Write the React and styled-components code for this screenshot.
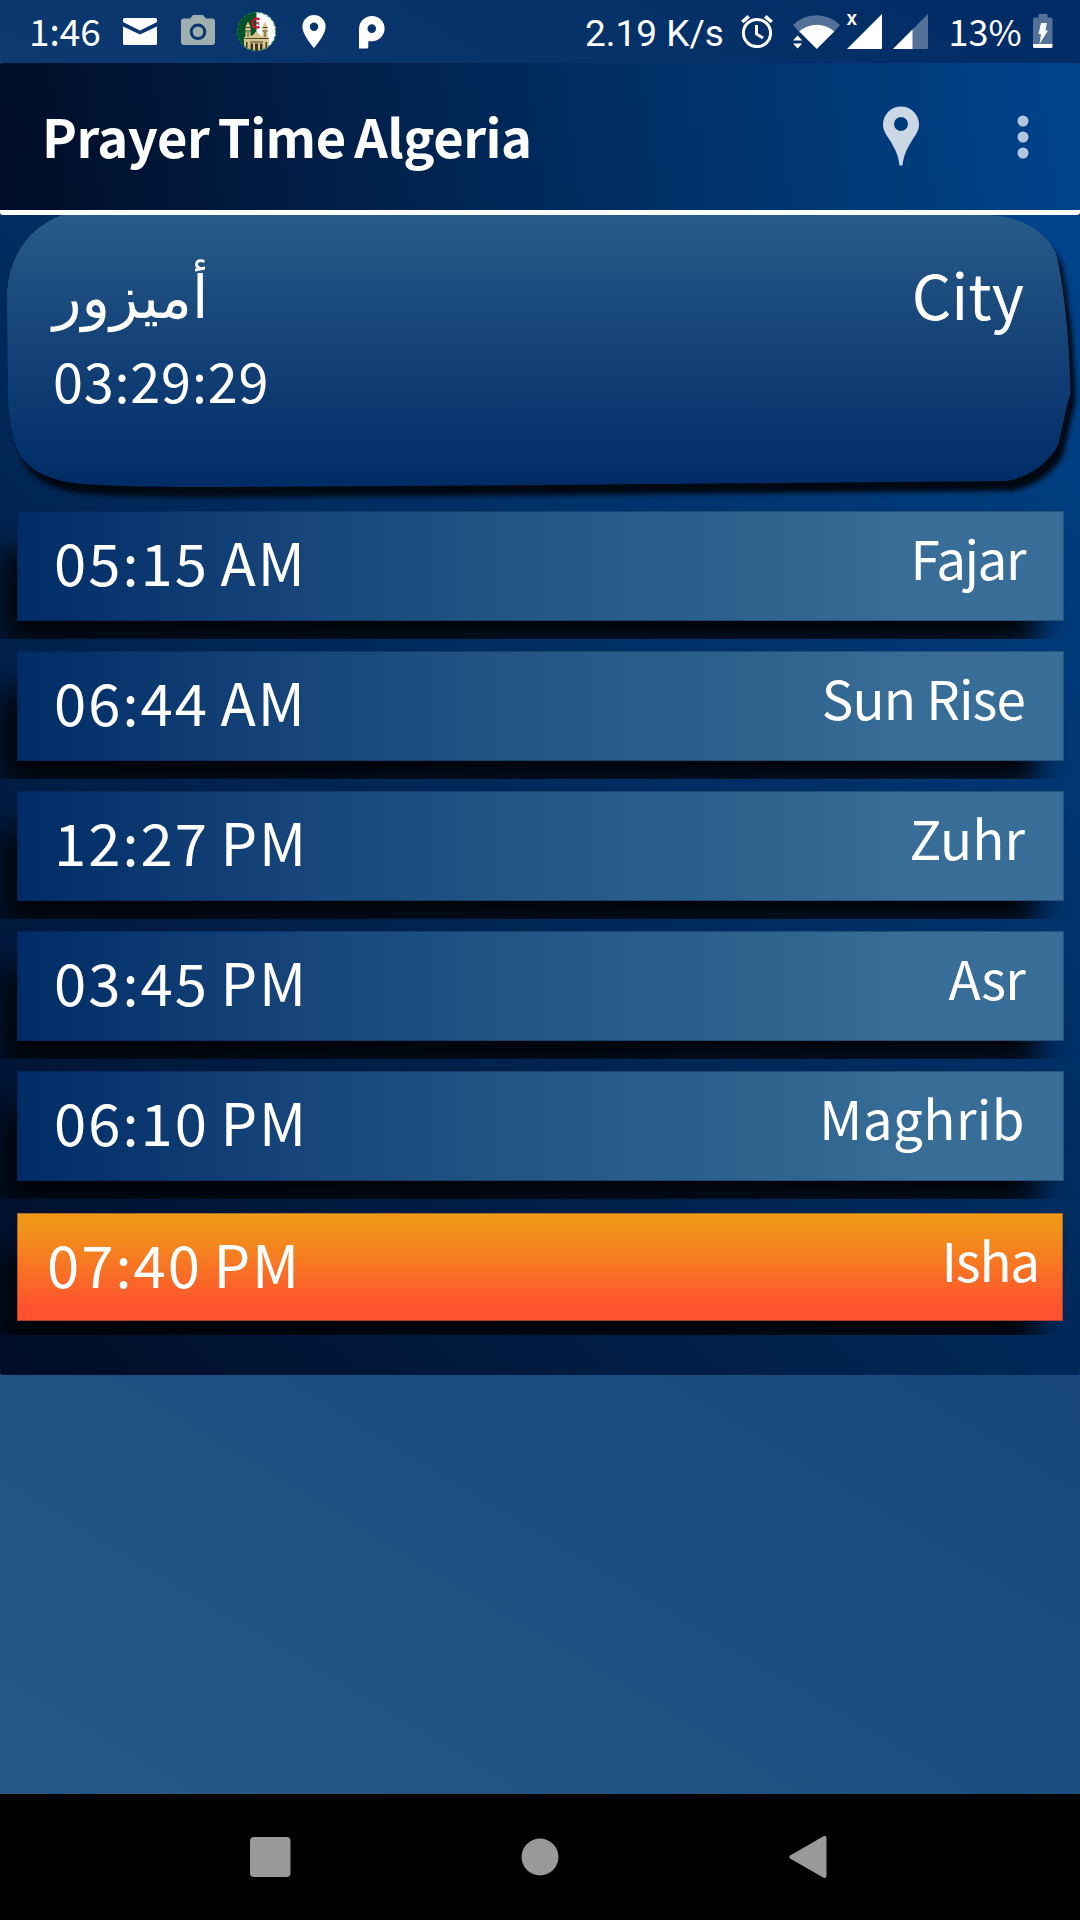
import styled, { createGlobalStyle } from 'styled-components';

const prayers = [
    { name: 'Fajar', time: '05:15 AM', tracking: -1.5 },
    { name: 'Sun Rise', time: '06:44 AM', tracking: -0.9 },
    { name: 'Zuhr', time: '12:27 PM', tracking: 0 },
    { name: 'Asr', time: '03:45 PM', tracking: -0.8 },
    { name: 'Maghrib', time: '06:10 PM', tracking: 0.4 },
    { name: 'Isha', time: '07:40 PM', tracking: -1.2, next: true },
];

const MailIcon = () => (
    <svg width="34" height="27" viewBox="0 0 34 27">
        <path fill="#fff" d="M1.5 0h31A1.5 1.5 0 0 1 34 1.5V4L17 12.500 0 4V1.500A1.500 1.500 0 0 1 1.500 0z" />
        <path fill="#fff" d="M0 8.500 17 16.500 34 8.500V25.500A1.500 1.500 0 0 1 32.500 27H1.500A1.500 1.500 0 0 1 0 25.500z" />
    </svg>
);

const CameraIcon = () => (
    <svg width="34" height="30" viewBox="0 0 34 30">
        <path fill="#9fafb0" fillRule="evenodd" d="M12 0h10l3 3.500h6a3 3 0 0 1 3 3V27a3 3 0 0 1-3 3H3a3 3 0 0 1-3-3V6.500a3 3 0 0 1 3-3h6zM17 8.500a8.300 8.300 0 1 0 0 16.600 8.300 8.300 0 0 0 0-16.600z" />
        <circle cx="17" cy="16.800" r="5.300" fill="#9fafb0" />
    </svg>
);

const MosqueIcon = () => (
    <svg width="39" height="39" viewBox="0 0 39 39">
        <defs>
            <clipPath id="badge"><circle cx="19.500" cy="19.500" r="19.500" /></clipPath>
        </defs>
        <g clipPath="url(#badge)">
            <path fill="#04522a" d="M0 0h19.500v39H0z" />
            <path fill="#fff" d="M19.500 0H39v39H19.500z" />
            <path fill="none" stroke="#d5102f" strokeWidth="2.400" d="M22.500 7.600a4.400 4.400 0 1 0 0 7" />
            <path fill="#d5102f" d="m18.500 11 4-1.500-.8 1.800 1 1.900z" />
            <path fill="#d9c68f" d="M7 39V26l1.500-2V15L11 9.500l2.500 5.500v9l2.500-1 3.500-4 3.500 4 2.500 1v-9L28 9.500l2.500 5.500v9l1.500 2v13z" />
            <path fill="none" stroke="#3a3420" strokeWidth=".9" d="M8.500 15.500h5M8.500 19h5M25.500 15.500h5M25.500 19h5M11 20v5M28 20v5M7.500 26.500h24M13 30h13" />
            <path fill="#3a3420" d="M13.500 31.500h2.500V39h-2.500zM18 31.500h3V39h-3zM23 31.500h2.500V39H23zM9 30h1.500v6H9zM28.500 30H30v6h-1.500z" />
        </g>
        <circle cx="19.500" cy="19.500" r="19" fill="none" stroke="#0d8a40" strokeDasharray="3 2" />
    </svg>
);

const PlaceIcon = () => (
    <svg width="24" height="33" viewBox="0 0 24 33">
        <path fill="#fff" fillRule="evenodd" d="M12 0a11.600 11.600 0 0 1 11.600 11.700C23.600 20 12 33 12 33S.4 20 .4 11.700A11.600 11.600 0 0 1 12 0zM12 7.500a4.200 4.200 0 1 0 0 8.400 4.200 4.200 0 0 0 0-8.400z" />
    </svg>
);

const ParkIcon = () => (
    <svg width="26" height="33" viewBox="0 0 26 33">
        <path fill="#fff" fillRule="evenodd" d="M0 32.500V13A13 13 0 0 1 13 0a12.600 12.600 0 0 1 0 25.200H9.300v5.800a1.500 1.500 0 0 1-1.500 1.500zM12.800 8.300a4.300 4.300 0 1 0 0 8.600 4.300 4.300 0 0 0 0-8.600z" />
    </svg>
);

const AlarmIcon = () => (
    <svg width="32" height="33" viewBox="0 0 32 33" fill="none" stroke="#fff" strokeWidth="3">
        <circle cx="16" cy="18" r="13.600" />
        <path d="M15.500 10v9l6.500 4" />
        <path strokeWidth="3.600" d="M1.200 7l6.600-5.600M30.800 7l-6.600-5.600" />
    </svg>
);

const WifiIcon = () => (
    <svg width="47" height="34" viewBox="0 0 47 34">
        <path fill="#54719a" d="M0 10a33 33 0 0 1 47 0L40 18a24 24 0 0 0-33 0z" />
        <path fill="#fff" d="M6.300 16.500a26 26 0 0 1 35 0L23.800 34zM0 25.500l4.600-5 4.600 5zM0 28.500h9.200l-4.600 5z" />
    </svg>
);

const SimIcon = ({ weak }) => (
    <svg width="35" height="35" viewBox="0 0 35 35">
        <path fill={weak ? '#54719a' : '#fff'} d="M35 0v34a1 1 0 0 1-1 1H0z" />
        {weak && <path fill="#fff" d="M19.500 15.500V35H0z" />}
    </svg>
);

const BatteryIcon = () => (
    <svg width="20" height="34" viewBox="0 0 20 34">
        <path fill="#54719a" d="M5.500 0h9v3.500H18a2 2 0 0 1 1.500 2V30H0V5.500a2 2 0 0 1 1.500-2h4z" />
        <path fill="#fff" d="M0 30h19.500v2.500A1.500 1.500 0 0 1 18 34H1.500A1.500 1.500 0 0 1 0 32.500zM8 9h6l-1.500 7.500H15L6.500 30l1.500-10H5.500z" />
    </svg>
);

const PinIcon = () => (
    <svg width="36" height="60" viewBox="0 0 36 59">
        <path fill="#ccd7e6" fillRule="evenodd" d="M18 0a18 18 0 0 1 18 18c0 6-3 10-7 16-5 8-8.500 15-9.500 25h-3c-1-10-4.500-17-9.500-25-4-6-7-10-7-16A18 18 0 0 1 18 0zM18 10.500a7 7 0 1 0 0 14 7 7 0 0 0 0-14z" />
    </svg>
);

const MoreIcon = () => (
    <svg width="12" height="44" viewBox="0 0 12 44" fill="#b3c6dd">
        <circle cx="6" cy="6" r="5.500" />
        <circle cx="6" cy="22" r="5.500" />
        <circle cx="6" cy="38" r="5.500" />
    </svg>
);

const PrayerRow = ({ name, time, tracking, next }) => (
    <Tile $next={next}>
        <Bar $next={next}>
            <Time>{time}</Time>
            <Name $tracking={tracking}>{name}</Name>
        </Bar>
    </Tile>
);

const App = () => (
    <Screen>
        <GlobalStyle />
        <StatusBar>
            <StatusGroup>
                <StatusText $width={68} $indent={-2}>1:46</StatusText>
                <Icon $left={24} $top={18}><MailIcon /></Icon>
                <Icon $left={24} $top={15}><CameraIcon /></Icon>
                <Icon $left={22} $top={12}><MosqueIcon /></Icon>
                <Icon $left={26} $top={15}><PlaceIcon /></Icon>
                <Icon $left={33} $top={16}><ParkIcon /></Icon>
            </StatusGroup>
            <StatusGroup>
                <Speed $width={138}>2.19 K/s</Speed>
                <Icon $left={17} $top={15}><AlarmIcon /></Icon>
                <Icon $left={20} $top={15}><WifiIcon /></Icon>
                <Sim>
                    <SimMark>x</SimMark>
                    <SimIcon />
                </Sim>
                <Icon $left={11} $top={14}><SimIcon weak /></Icon>
                <Percent $width={70}>13%</Percent>
                <Icon $left={13} $top={14}><BatteryIcon /></Icon>
            </StatusGroup>
        </StatusBar>
        <Header>
            <Title>Prayer Time Algeria</Title>
            <Actions>
                <PinIcon />
                <MoreIcon />
            </Actions>
        </Header>
        <Panel>
            <CardShadow>
                <Card>
                    <div>
                        <CityName lang="ar" dir="rtl">أميزور</CityName>
                        <Countdown>03:29:29</Countdown>
                    </div>
                    <CityLabel>City</CityLabel>
                </Card>
            </CardShadow>
            {prayers.map((prayer) => <PrayerRow key={prayer.name} {...prayer} />)}
        </Panel>
        <NavBar>
            <svg width="41" height="41" viewBox="0 0 41 41"><rect width="40.500" height="40" rx="4" fill="#999" /></svg>
            <svg width="38" height="38" viewBox="0 0 38 38"><circle cx="19" cy="19" r="18.500" fill="#999" /></svg>
            <svg width="38" height="42" viewBox="0 0 38 42"><path fill="#999" stroke="#999" strokeWidth="4" strokeLinejoin="round" d="M2.500 21 35.500 2v38z" /></svg>
        </NavBar>
    </Screen>
);

const GlobalStyle = createGlobalStyle`
    body{
        margin: 0;
    }
    svg{
        display: block;
        flex-shrink: 0;
    }
`;

const Screen = styled.div`
    width: 1080px;
    height: 1920px;
    display: flex;
    flex-direction: column;
    overflow: hidden;
    color: #ffffff;
    font-family: "Noto Sans CJK SC", "Noto Sans", sans-serif;
    white-space: nowrap;
    background: linear-gradient(211deg, #002b64 0%, #17457a 50%, #275b88 100%);
`;

const StatusBar = styled.div`
    height: 63px;
    display: flex;
    justify-content: space-between;
    padding: 0 27.500px 0 31px;
`;

const StatusGroup = styled.div`
    display: flex;
`;

const StatusText = styled.span`
    width: ${({ $width }) => $width}px;
    font-size: 37px;
    line-height: 61px;
    text-indent: ${({ $indent }) => $indent || 0}px;
`;

const Speed = styled(StatusText)`
    font-family: Roboto, sans-serif;
    line-height: 67px;
    text-indent: -0.500px;
`;

const Percent = styled(StatusText)`
    margin-left: 22px;
    font-size: 36px;
    text-indent: -1px;
`;

const Icon = styled.div`
    margin-left: ${({ $left }) => $left}px;
    padding-top: ${({ $top }) => $top}px;
`;

const Sim = styled.div`
    position: relative;
    margin-left: 7px;
    padding-top: 14px;
`;

const SimMark = styled.span`
    position: absolute;
    left: 0;
    top: 7px;
    font: 500 21px/22px Roboto, sans-serif;
`;

const Header = styled.header`
    box-sizing: border-box;
    height: 152px;
    display: flex;
    justify-content: space-between;
    padding: 0 51.500px 0 42px;
    border-bottom: 5px solid #ffffff;
    border-radius: 3px;
    background: linear-gradient(82.250deg, #000d26 0%, #002a5c 50%, #00448c 100%);
`;

const Title = styled.h1`
    margin: 0;
    font-size: 52.500px;
    font-weight: 700;
    line-height: 144px;
    letter-spacing: -0.500px;
    word-spacing: -3px;
`;

const Actions = styled.div`
    display: flex;
    align-items: flex-start;
    gap: 98px;
    padding-top: 43px;

    svg:last-child{
        margin-top: 8.500px;
    }
`;

const Panel = styled.main`
    height: 1160px;
    border-radius: 3px;
    background: linear-gradient(43deg, #000d26 0%, #002a5c 50%, #00448c 100%);
`;

const CardShadow = styled.section`
    height: 284px;
    filter: drop-shadow(5px 10px 2.500px #000812);
`;

const Card = styled.div`
    box-sizing: border-box;
    height: 284px;
    display: flex;
    justify-content: space-between;
    padding: 39px 56px 0 53px;
    background: linear-gradient(180deg, #275b88 0px, #17457a 115px, #002c66 270px);
    clip-path: path('M62 0C30 12 7 40 7 85L8 185C9 205 14 230 21 241C32 260 62 268 86 269C120 272 180 272 220 272L540 270L1005 266C1032 263 1053 242 1058 230C1063 212 1066 192 1070.500 178C1070 140 1066 80 1056 38C1046 16 1020 0 984 0Z');
`;

const CityName = styled.div`
    height: 89px;
    font-family: "DejaVu Sans", sans-serif;
    font-size: 59px;
    line-height: 87px;
    text-align: left;
`;

const Countdown = styled.div`
    font-size: 54px;
    line-height: 74px;
    letter-spacing: 0.800px;
`;

const CityLabel = styled.div`
    font-size: 62px;
    line-height: 79px;
`;

const Tile = styled.div`
    box-sizing: border-box;
    height: ${({ $next }) => ($next ? 136 : 140)}px;
    padding: ${({ $next }) => ($next ? '14px 17px 0 17px' : '12px 16px 0 17px')};
    overflow: hidden;
`;

const Bar = styled.div`
    box-sizing: border-box;
    height: ${({ $next }) => ($next ? 108 : 110)}px;
    display: flex;
    justify-content: space-between;
    padding: ${({ $next }) => ($next ? '0 24px 0 30px' : '0 39px 0 37px')};
    background: ${({ $next }) => ($next
        ? 'linear-gradient(180deg, #f09918 0%, #f19319 15%, #ff522f 88%, #ff512f 100%)'
        : 'linear-gradient(90deg, #002c66 0%, #17457a 27%, #235685 49%, #30658f 75%, #386d97 85%, #396e98 100%)')};
    box-shadow: -22px 33px 28px -5px rgba(0, 4, 8, 0.980), inset 0 0 0 1px rgba(0, 20, 60, 0.300);
`;

const Time = styled.span`
    font-size: 58px;
    line-height: 101px;
    letter-spacing: 2px;
    word-spacing: -3.500px;
`;

const Name = styled.span`
    font-size: 53px;
    line-height: 93px;
    letter-spacing: ${({ $tracking }) => $tracking}px;
`;

const NavBar = styled.nav`
    box-sizing: border-box;
    height: 126px;
    margin-top: auto;
    padding-right: 3px;
    display: flex;
    align-items: center;
    justify-content: center;
    gap: 230px;
    background: #000000;
`;

export default App;
